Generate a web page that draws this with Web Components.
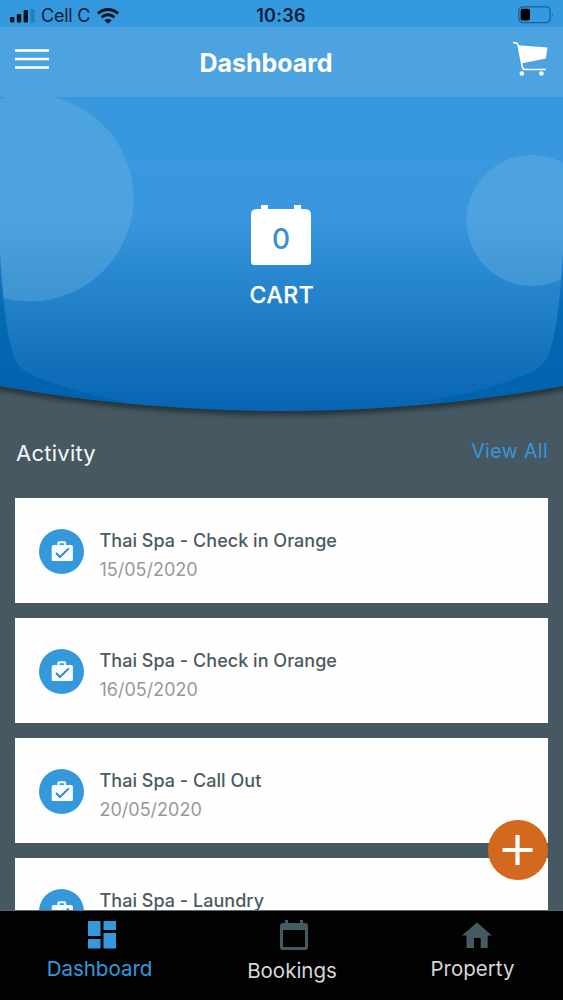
<!DOCTYPE html>
<html lang="en">
<head>
<meta charset="utf-8">
<title>Dashboard</title>
<style>
html,body{margin:0;padding:0;background:#465962}
body{font-family:Inter,"Liberation Sans",sans-serif;height:1000px;overflow:hidden}
</style>
</head>
<body>
<app-shell></app-shell>
<script>
const define = (name, html, setup) => {
  const tpl = document.createElement('template');
  tpl.innerHTML = html;
  customElements.define(name, class extends HTMLElement {
    constructor() {
      super();
      this.attachShadow({mode: 'open'}).append(tpl.content.cloneNode(true));
    }
    connectedCallback() { if (setup) setup(this, this.shadowRoot); }
  });
};

define('status-bar', `
<style>
:host{display:grid;grid-template-columns:1fr auto 1fr;align-items:center;height:27px;padding:4px 9px 0 10px;box-sizing:border-box;color:#06203a;font-size:18px;line-height:22px}
.l{display:flex;align-items:center}
.c{margin-left:6px;letter-spacing:-.25px}
.w{margin-left:7px}
.t{font-weight:600;letter-spacing:.3px;margin-right:2px}
.b{justify-self:end;margin-top:-1px}
svg{display:block}
</style>
<div class="l">
<svg width="25" height="14" viewBox="0 0 25 14"><g fill="#04111f"><rect y="8" width="4.4" height="5.500" rx="1"/><rect x="6.8" y="5" width="4.4" height="8.500" rx="1"/><rect x="13.6" y="1" width="4.4" height="12.500" rx="1"/></g><rect x="20.4" y="0" width="4.2" height="13.500" rx="1" fill="#2b7db6"/></svg>
<span class="c">Cell C</span>
<svg class="w" width="22" height="16" viewBox="0 0 22 16"><g fill="none" stroke="#04111f" stroke-width="2.9"><path d="M1 5.6C6.5.1 15.500.1 21 5.600"/><path d="M4.700 9.300C8.300 5.800 13.700 5.800 17.300 9.300"/></g><path d="M11 15.800l3.600-3.600q-3.600-2.600-7.200 0z" fill="#04111f"/></svg>
</div>
<span class="t">10:36</span>
<svg class="b" width="36" height="18" viewBox="0 0 36 18"><rect x=".8" y=".8" width="31.400" height="15.800" rx="4" fill="none" stroke="#205f91" stroke-width="1.300"/><rect x="2.600" y="2.800" width="9.400" height="11.800" rx="2" fill="#000"/><path d="M34 6.200q1.700 2.500 0 5z" fill="#205f91"/></svg>
`);

define('nav-bar', `
<style>
:host{display:grid;grid-template-columns:184.500px auto 1fr;height:70px;box-sizing:border-box;padding:0 15px;background:#4da2e0;color:#fff}
.m{margin-top:21px}
h1{margin:20px 0 0;font-size:25px;line-height:32px;font-weight:700;letter-spacing:-.05px}
.k{justify-self:end;margin-top:14px}
svg{display:block}
</style>
<svg class="m" width="34" height="22" viewBox="0 0 34 22"><path d="M0 2.500h34M0 11h34M0 19.500h34" stroke="#fff" stroke-width="2.700"/></svg>
<h1><slot></slot></h1>
<svg class="k" width="35" height="36" viewBox="0 0 35 36"><path d="M0 1.800h2.200q2.200 0 3 2.700L9.300 26Q9.800 28.500 12 28.500H33" fill="none" stroke="#fff" stroke-width="1.500"/><path d="M5 4.200L34.500 6.500 32.900 17.500 9.200 22.300z" fill="#fff"/><circle cx="8.800" cy="32.500" r="2.300" fill="#fff"/><circle cx="28.400" cy="32.500" r="2.300" fill="#fff"/></svg>
`);

define('hero-backdrop', `
<style>:host{display:block}svg{display:block}</style>
<svg width="563" height="430" viewBox="0 0 563 430">
<defs>
<linearGradient id="g" gradientUnits="userSpaceOnUse" x1="0" y1="0" x2="0" y2="411"><stop offset="0" stop-color="#3499de"/><stop offset=".53" stop-color="#3a97df"/><stop offset=".64" stop-color="#2b8bd2"/><stop offset=".82" stop-color="#1a78c1"/><stop offset="1" stop-color="#0664b2"/></linearGradient>
<linearGradient id="e" gradientUnits="userSpaceOnUse" x1="0" y1="250" x2="0" y2="400"><stop offset="0" stop-color="#2580c8"/><stop offset=".4" stop-color="#0669b4"/><stop offset="1" stop-color="#0062ac"/></linearGradient>
<filter id="s" x="-5%" y="-5%" width="110%" height="115%"><feGaussianBlur stdDeviation="2.500"/></filter>
<clipPath id="c"><path d="M0 97H563V386Q281.500 436 0 386z"/></clipPath>
</defs>
<path d="M-20 300H583V387Q281.500 444 -20 387z" fill="#26353b" filter="url(#s)"/>
<path d="M0 0H563V386Q281.500 436 0 386z" fill="url(#g)"/>
<g clip-path="url(#c)">
<circle cx="30" cy="198" r="103.500" fill="#75b8e2" fill-opacity=".34"/>
<circle cx="532" cy="220.500" r="65.500" fill="#75b8e2" fill-opacity=".34"/>
<path d="M0 252C3 300 6 330 13 354Q18 370 34 376Q70 391 125 402L0 402z" fill="url(#e)"/>
<path d="M563 252C560 300 557 330 549 354Q543 368 527 374Q480 394 420 402L563 402z" fill="url(#e)"/>
</g>
</svg>
`);

define('cart-counter', `
<style>
:host{display:flex;flex-direction:column;align-items:center;color:#fff}
.box{display:grid;place-items:center;width:60px;height:61px}
.box>*{grid-area:1/1}
b{font-size:28px;line-height:34px;font-weight:500;color:#3a8fd4;margin-top:6px}
.l{margin:15px 0 0 2px;font-size:23px;line-height:28px;font-weight:500;letter-spacing:.6px;-webkit-text-stroke:.25px currentColor}
</style>
<div class="box"><svg width="60" height="61" viewBox="0 0 60 61"><path d="M10 0h7v4h26V0h7v4h4q6 0 6 6v47q0 3-3 3H3q-3 0-3-3V10q0-6 6-6h4z" fill="#fff"/></svg><b>0</b></div>
<span class="l"><slot></slot></span>
`);

define('activity-card', `
<style>
:host{display:flex;align-items:center;height:105px;flex:none;box-sizing:border-box;padding:2px 24px 0;background:#fefefe}
svg{display:block;flex:none}
.t{margin:8px 0 0 15.500px;display:flex;flex-direction:column}
.n{font-size:18px;line-height:24px;font-weight:500;color:#4b5b61;letter-spacing:.03px}
.d{margin-top:5px;height:24px;font-size:18px;line-height:24px;color:#999}
</style>
<svg width="45" height="45" viewBox="0 0 45 45"><circle cx="22.500" cy="22.500" r="22.500" fill="#3498db"/><path d="M14.500 16h3.900v-2q0-1.800 1.800-1.800h5.200q1.800 0 1.800 1.800v2h4.900q1.800 0 1.800 1.800v12.600q0 1.700-1.700 1.700H14.400q-1.700 0-1.700-1.700V17.800q0-1.800 1.800-1.800zM20.700 16h4.400v-1.800h-4.400z" fill="#f4fafe" fill-rule="evenodd"/><path d="M17 24l4 4 8.800-8.600" fill="none" stroke="#3a8ccb" stroke-width="2"/></svg>
<div class="t"><span class="n"><slot></slot></span><span class="d"></span></div>
`, (el, root) => { root.querySelector('.d').textContent = el.getAttribute('date'); });

define('tab-item', `
<style>
:host{display:flex;flex-direction:column;align-items:center;color:#d6d6d6;font-size:20.500px;line-height:26px}
:host([active]){color:#3498db}
::slotted(svg){display:block;margin-left:var(--shift,4px)}
.x{margin-top:var(--gap,4px)}
</style>
<slot name="icon"></slot><span class="x"><slot></slot></span>
`);

define('tab-bar', `
<style>:host{display:grid;grid-template-columns:199px 186px 175px;height:90px;flex:none;padding-top:8px;box-sizing:border-box;border-top:1px solid #606568;background:#020203}
tab-item{--gap:5px}
.bk{--gap:7px}
.h{--shift:9px}
</style>
<tab-item active><svg slot="icon" width="28" height="32" viewBox="0 0 28 32"><path d="M0 2h12.500v15H0zM15.500 2H28v9H15.500zM0 20h12.500v9.500H0zM15.500 14H28v15.500H15.500z" fill="#3498db"/></svg>Dashboard</tab-item>
<tab-item class="bk"><svg slot="icon" width="28" height="32" viewBox="0 0 28 32"><path d="M5 1h3v3h12V1h3v3h2q3 0 3 3v21q0 3-3 3H3q-3 0-3-3V7q0-3 3-3h2zM3 11v17h22V11z" fill="#465a63" fill-rule="evenodd"/></svg>Bookings</tab-item>
<tab-item class="h"><svg slot="icon" width="30" height="32" viewBox="0 0 30 32"><path d="M15 3.500L30 16.500h-4.300v12.500h-7V19h-6.700v10H4.500V16.500H0z" fill="#465a63"/></svg>Property</tab-item>
`);

define('fab-button', `
<style>:host{display:block;width:60px;height:60px}svg{display:block}</style>
<svg width="60" height="60" viewBox="0 0 60 60"><circle cx="30" cy="30" r="30" fill="#d2691e"/><path d="M29.500 15v30M14.500 30h30" stroke="#fff" stroke-width="4.200"/></svg>
`);

define('app-shell', `
<style>
:host{display:flex;flex-direction:column;width:563px;height:1000px;position:relative;overflow:hidden;background:#465962}
.top{height:430px;flex:none;position:relative;display:flex;flex-direction:column}
hero-backdrop{position:absolute;left:0;top:0}
status-bar,nav-bar,cart-counter{position:relative}
cart-counter{margin:108px 1px 0 0}
.feed{flex:1;min-height:0;overflow:hidden;padding:0 15px;display:flex;flex-direction:column}
header{display:flex;justify-content:space-between;height:68px;flex:none}
h2{margin:9px 0 0 1px;font-size:22px;line-height:28px;font-weight:400;color:#f5f8f9;letter-spacing:.25px}
.all{margin-top:8px;font-size:19.500px;line-height:26px;color:#3b94d6;letter-spacing:.4px}
.list{display:flex;flex-direction:column;gap:15px}
fab-button{position:absolute;left:488px;top:820px}
</style>
<div class="top">
<hero-backdrop></hero-backdrop>
<status-bar></status-bar>
<nav-bar>Dashboard</nav-bar>
<cart-counter>CART</cart-counter>
</div>
<div class="feed">
<header><h2>Activity</h2><span class="all">View All</span></header>
<div class="list">
<activity-card date="15/05/2020">Thai Spa - Check in Orange</activity-card>
<activity-card date="16/05/2020">Thai Spa - Check in Orange</activity-card>
<activity-card date="20/05/2020">Thai Spa - Call Out</activity-card>
<activity-card>Thai Spa - Laundry</activity-card>
</div>
</div>
<tab-bar></tab-bar>
<fab-button></fab-button>
`);
</script>
</body>
</html>
